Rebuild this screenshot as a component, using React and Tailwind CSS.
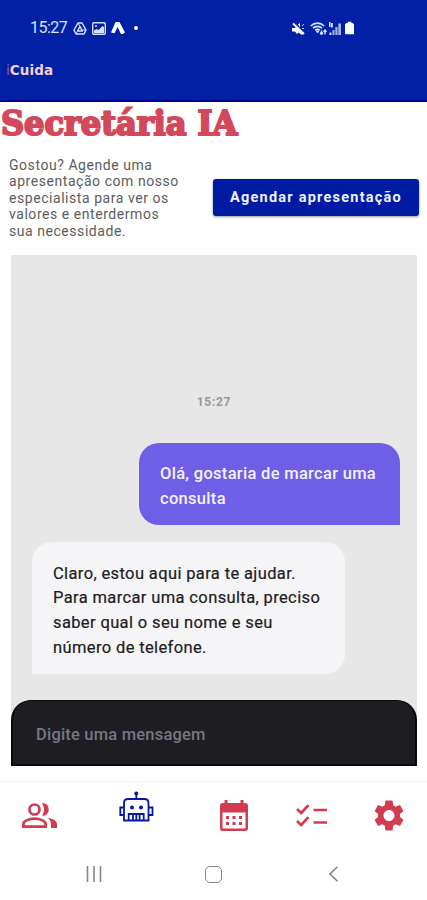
import { clsx } from 'clsx'

const messages = [
  { from: 'user', lines: ['Olá, gostaria de marcar uma', 'consulta'] },
  {
    from: 'bot',
    lines: [
      'Claro, estou aqui para te ajudar.',
      'Para marcar uma consulta, preciso',
      'saber qual o seu nome e seu',
      'número de telefone.',
    ],
  },
]

const intro = [
  'Gostou? Agende uma',
  'apresentação com nosso',
  'especialista para ver os',
  'valores e enterdermos',
  'sua necessidade.',
]

function StatusBar() {
  return (
    <div className="flex h-14 items-center pl-[30px] pr-[73px] text-[#d8e0ff]">
      <span className="w-[38px] whitespace-nowrap text-[16px] tracking-[-0.5px]">15:27</span>
      {/* Drive */}
      <svg className="ml-[5px] h-[13px] w-[14px]" viewBox="0 0 14 13" fill="none" stroke="currentColor" strokeWidth="1.5" strokeLinejoin="round">
        <path d="M5 1h4l4 7-2 4H3L1 8z" />
        <path d="M7 4.5 4.6 9h4.8z" />
        <path d="M5 1l2 3.500M13 8H9.400M3 12l1.600-3" strokeWidth="1" />
      </svg>
      {/* Picture */}
      <svg className="ml-[5px] h-[13px] w-[14px]" viewBox="0 0 14 13">
        <rect x=".7" y=".7" width="12.600" height="11.600" rx="1.300" fill="none" stroke="currentColor" strokeWidth="1.400" />
        <path d="M2 11V8.500l2.500-1.500 2 1 4-4 1.500 1V11z" fill="currentColor" />
        <circle cx="4" cy="4" r="1" fill="currentColor" />
      </svg>
      {/* Peaks */}
      <svg className="ml-[5px] h-[12px] w-[14px] text-white" viewBox="0 0 14 12" fill="currentColor">
        <path d="M4.500 0h4L14 10.500 12 12h-2L6.600 5z" />
        <path d="M4.500 0 6.800 4.600 3.500 11.300 0 10.500z" />
      </svg>
      <span className="ml-[9px] size-[4px] rounded-full bg-white" />
      <div className="ml-auto flex items-center gap-[4px]">
        {/* Muted */}
        <svg className="mr-[1px] h-[13px] w-[13px] text-white" viewBox="0 0 13 13" fill="currentColor">
          <path d="M0 6h3l1-1 7 7-1 1-3.500-2.500L5 12 3 9.500H0z" />
          <path d="M1 1.500 12 12" stroke="currentColor" strokeWidth="1.800" />
          <path d="M6 2.500 8 1v4.500z" />
          <path d="M10 4l2-2M10 6.500h2" stroke="currentColor" strokeWidth=".8" />
        </svg>
        {/* Wi-Fi */}
        <svg className="-mr-[2px] h-[13px] w-[17px]" viewBox="0 0 17 13" fill="none" stroke="currentColor">
          <path d="M.8 4C4.500.2 10.500.2 14.200 4M3 6.200c2.500-2.500 6.500-2.500 9 0M5.200 8.300c1.300-1.300 3.300-1.300 4.600 0" strokeWidth="1.700" />
          <path d="M6.300 9h2.400l-1.200 2z" fill="currentColor" />
          <path d="M11.500 12.500v-4M10 10.500l1.500 2 1.500-2M15 12.500v-4M13.500 9.800 15 8l1.500 1.800" strokeWidth="1.400" />
        </svg>
        {/* Signal */}
        <svg className="h-[13px] w-[12px]" viewBox="0 0 12 13" fill="currentColor">
          <path d="M0 0h1.500v5H0zM2 1h1.800v4.500H2zM.5 10.500h2V13h-2z" />
          <path d="M3.500 8h2v5h-2zM6.300 5h2.300v8H6.300zM9.300 1.500H12V13H9.300z" opacity=".75" />
        </svg>
        <svg className="h-[14px] w-[9px] text-white" viewBox="0 0 10 14" fill="currentColor">
          <path d="M3 0h4v1.500h1.500L10 3v10q0 1-1 1H1q-1 0-1-1V3l1.500-1.500H3z" />
        </svg>
      </div>
    </div>
  )
}

function Bubble({ from, lines }) {
  return (
    <div
      className={clsx(
        'rounded-[20px] pl-[21px] text-[16.500px] leading-[24.800px] whitespace-nowrap',
        from === 'user'
          ? 'mr-[17px] h-[82px] w-[261px] self-end rounded-br-none bg-[#6f5fe6] pt-[19px] font-medium tracking-[0.3px] text-[#f4f2ff]'
          : 'mt-[17px] ml-[21px] h-[132px] w-[313px] rounded-bl-none bg-[#f5f5f8] pt-[19.500px] tracking-[0.37px] text-[#1d1c21] [-webkit-text-stroke:0.200px_#1d1c21]'
      )}
    >
      {lines.map((line) => (
        <p key={line}>{line}</p>
      ))}
    </div>
  )
}

function PeopleIcon() {
  return (
    <svg className="h-[25px] w-[35px]" viewBox="0 0 35 25" fill="none" stroke="currentColor" strokeWidth="2.700">
      <circle cx="12.500" cy="6.500" r="5" />
      <path d="M1.400 23.600v-2.400c0-3.500 6-5.500 11.100-5.500s11.100 2 11.100 5.500v2.400z" />
      <path d="M20 .4c9-1.500 9 13.600 0 12.200 2.700-4 2.700-8.200 0-12.200zM25.500 14.700c5.500 1 9.500 3.200 9.500 6.300v4h-6v-4c0-2.700-1.500-4.800-3.500-6.300z" fill="currentColor" stroke="none" />
    </svg>
  )
}

function RobotIcon() {
  return (
    <svg className="h-[31px] w-[35px]" viewBox="0 0 35 31" fill="none" stroke="currentColor" strokeWidth="1.800">
      <circle cx="17.300" cy="2.500" r="2" fill="currentColor" stroke="none" />
      <path d="M17.300 3v5" />
      <path d="M9 8h16.500q4 0 4 4v17.500H5V12q0-4 4-4z" />
      <path d="M5 16.500H1.300v7.500H5M29.500 16.500h4v7.500h-4M9.700 29.500v-6.500h15v6.500M14 23v6.500M17.300 23v6.500M20.600 23v6.500" />
      <circle cx="13" cy="16.500" r="2" fill="currentColor" stroke="none" />
      <circle cx="22" cy="16.500" r="2" fill="currentColor" stroke="none" />
    </svg>
  )
}

function CalendarIcon() {
  return (
    <svg className="h-[31px] w-[28px]" viewBox="0 0 28 31" fill="currentColor">
      <path fillRule="evenodd" d="M4.500 0h3v3h13V0h3v3H25q3 0 3 3v22q0 3-3 3H3q-3 0-3-3V6q0-3 3-3h1.500zM2.500 12.500v15q0 1 1 1h21q1 0 1-1v-15z" />
      <path d="M6 16h3v3H6zM12.500 16h3v3h-3zM19 16h3v3h-3zM6 22h3v3H6zM12.500 22h3v3h-3zM19 22h3v3h-3z" />
    </svg>
  )
}

function ChecklistIcon() {
  return (
    <svg className="h-[23px] w-[31px]" viewBox="0 0 31 23" fill="none" stroke="currentColor" strokeWidth="2.700">
      <path d="M1 5l4.200 4L12.500 1.200M1 17l4.200 4 7.300-7.800M17.500 6H31M17.500 18.500H31" />
    </svg>
  )
}

function GearIcon() {
  return (
    <svg className="h-[31px] w-[30px]" viewBox="2.200 2 19.600 20" preserveAspectRatio="none" fill="currentColor">
      <path d="M19.140 12.940c.04-.3.06-.61.06-.94 0-.32-.02-.64-.07-.94l2.030-1.580a.49.49 0 0 0 .12-.61l-1.920-3.320a.488.488 0 0 0-.59-.22l-2.390.96c-.5-.38-1.030-.7-1.620-.94l-.36-2.540a.484.484 0 0 0-.48-.41h-3.840c-.24 0-.43.17-.47.41l-.36 2.540c-.59.24-1.130.57-1.620.94l-2.390-.96c-.22-.08-.47 0-.59.22L2.740 8.870c-.12.21-.08.47.12.61l2.030 1.580c-.05.3-.09.63-.09.94s.02.64.07.94l-2.030 1.580a.49.49 0 0 0-.12.61l1.920 3.320c.12.22.37.29.59.22l2.390-.96c.5.38 1.030.7 1.620.94l.36 2.540c.05.24.24.41.48.41h3.840c.24 0 .44-.17.47-.41l.36-2.540c.59-.24 1.130-.56 1.620-.94l2.390.96c.22.08.47 0 .59-.22l1.920-3.320c.12-.22.07-.47-.12-.61l-2.010-1.580zM12 15.600c-1.980 0-3.600-1.620-3.600-3.600s1.620-3.600 3.600-3.600 3.600 1.620 3.600 3.600-1.620 3.600-3.600 3.600z" />
    </svg>
  )
}

export default function App() {
  return (
    <div className="flex h-[900px] w-[427px] flex-col overflow-hidden bg-white font-['Roboto',sans-serif]">
      <header className="h-[102px] shrink-0 border-b-2 border-[#000392] bg-[#0021a5]">
        <StatusBar />
        <p className="pt-[5px] pl-[6px] font-['DejaVu_Sans',sans-serif] text-[13.500px] leading-[18px] font-bold tracking-[0.1px] text-[#f3cfdf]">
          <span className="font-normal text-[#a8508f]">i</span>Cuida
        </p>
      </header>

      <h1 className="h-[43px] origin-left scale-x-[0.97] pl-[1px] font-['DejaVu_Serif',serif] text-[33px] leading-[43px] font-bold whitespace-nowrap text-[#d3495c] [-webkit-text-stroke:2.200px_#d3495c]">
        Secretária IA
      </h1>

      <section className="flex h-[110px] shrink-0 justify-between pr-2 pl-[9px]">
        <div className="pt-[11.500px] text-[14px] leading-[16.600px] tracking-[0.55px] whitespace-nowrap text-[#5c5c5c]">
          {intro.map((line) => (
            <p key={line}>{line}</p>
          ))}
        </div>
        <button className="mt-[34px] h-[37px] w-[206px] rounded-[3px] bg-[#001ba3] text-[14.500px] font-bold tracking-[1.230px] whitespace-nowrap text-[#eef1ff] shadow-sm shadow-gray-400">
          Agendar apresentação
        </button>
      </section>

      <main className="mx-auto mr-[10px] ml-[11px] flex h-[511px] shrink-0 flex-col bg-[#e7e7e7]">
        <p className="mt-[139px] mb-[33px] h-4 text-center text-[12px] leading-4 font-bold tracking-[0.700px] text-[#98989a]">15:27</p>
        {messages.map((message) => (
          <Bubble key={message.from} {...message} />
        ))}
        <div className="mt-auto flex h-[66px] items-center rounded-t-[20px] border-2 border-t-1 border-[#09090c] bg-[#1d1d22] pt-[5px] pl-[23px] text-[16.500px] font-medium tracking-[0.2px] text-[#777785]">
          Digite uma mensagem
        </div>
      </main>

      <nav className="mt-[15px] flex h-[67px] shrink-0 items-center border-t border-[#f3f3f3] pl-[22px] text-[#d33b50]">
        <PeopleIcon />
        <span className="mb-[17px] ml-[62px] text-[#0718a5]">
          <RobotIcon />
        </span>
        <span className="ml-[66px]">
          <CalendarIcon />
        </span>
        <span className="ml-[48px]">
          <ChecklistIcon />
        </span>
        <span className="ml-[47px]">
          <GearIcon />
        </span>
      </nav>

      {/* Android navigation keys */}
      <footer className="flex h-[52px] items-center pl-[86px] text-[#858585]">
        <svg className="h-4 w-4" viewBox="0 0 16 16" fill="none" stroke="currentColor" strokeWidth="1.600">
          <path d="M1.500 0v16M8 0v16M14.500 0v16" />
        </svg>
        <span className="ml-[103px] size-[17px] rounded-[5px] border-[1.500px] border-current" />
        <svg className="ml-[107px] h-4 w-[9px]" viewBox="0 0 9 16" fill="none" stroke="currentColor" strokeWidth="1.600">
          <path d="M8.500.7 1 8l7.500 7.300" />
        </svg>
      </footer>
    </div>
  )
}
